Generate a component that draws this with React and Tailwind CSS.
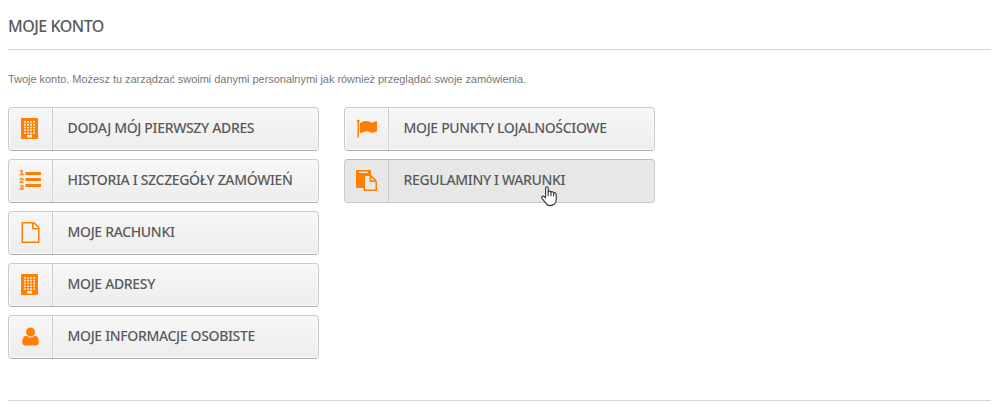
const windowRows = [0, 1, 2, 3, 4]
const windowCols = [0, 1, 2, 3]

function BuildingIcon() {
    return (
        <svg className="mr-px w-[17px] h-[21px]" viewBox="0 0 17 21" fill="currentColor">
            <rect width="17" height="21" rx="0.8" />
            {windowRows.map((row) =>
                windowCols.map((col) => (
                    <rect key={`${row}-${col}`} x={3 + col * 3} y={3 + row * 2.8} width="2" height="1.7" fill="#f3f3f3" fillOpacity="0.85" />
                ))
            )}
            <rect x="6" y="16.8" width="5" height="2.7" fill="#f3f3f3" />
        </svg>
    )
}

function ListIcon() {
    return (
        <svg className="w-[22px] h-[22px]" viewBox="0 0 22 22" fill="currentColor" stroke="currentColor" strokeWidth="0">
            <text x="0.6" y="6.1" fontSize="8" fontWeight="bold" strokeWidth="0.3" fontFamily="Liberation Sans, sans-serif">1</text>
            <text x="0.6" y="13.6" fontSize="8" fontWeight="bold" strokeWidth="0.3" fontFamily="Liberation Sans, sans-serif">2</text>
            <text x="0.6" y="21.1" fontSize="8" fontWeight="bold" strokeWidth="0.3" fontFamily="Liberation Sans, sans-serif">3</text>
            <rect x="6.5" y="3" width="15.5" height="3" rx="0.4" />
            <rect x="6.5" y="9" width="15.5" height="3" rx="0.4" />
            <rect x="6.5" y="15" width="15.5" height="3" rx="0.4" />
        </svg>
    )
}

function FileIcon() {
    return (
        <svg className="w-[21px] h-[21px]" viewBox="0 0 1792 1792" fill="currentColor">
            <path d="M1596 380q28 28 48 76t20 88v1152q0 40-28 68t-68 28h-1344q-40 0-68-28t-28-68v-1600q0-40 28-68t68-28h896q40 0 88 20t76 48zm-444-244v376h376q-10-29-22-41l-313-313q-12-12-41-22zm384 1528v-1024h-416q-40 0-68-28t-28-68v-416h-768v1536h1280z" />
        </svg>
    )
}

function UserIcon() {
    return (
        <svg className="w-[17px] h-[21px]" viewBox="0 0 1408 1792" fill="currentColor">
            <path transform="matrix(1 0 0 -1 0 1536)" d="M1408 131q0-120-73-189.500t-194-69.500h-874q-121 0-194 69.500t-73 189.500q0 53 3.500 103.500t14 109 26.500 108.500 43 97.500 62 81 85.500 53.500 111.500 20q9 0 42-21.500t74.500-48 108-48 133.500-21.500 133.500 21.500 108 48 74.500 48 42 21.500q61 0 111.500-20t85.500-53.500 62-81 43-97.500 26.500-108.500 14-109 3.500-103.500zM1088 1024q0-159-112.500-271.500t-271.500-112.500-271.500 112.500-112.500 271.500 112.500 271.500 271.500 112.500 271.500-112.500 112.500-271.500z" />
        </svg>
    )
}

function FlagIcon() {
    return (
        <svg className="w-[21px] h-[21px]" viewBox="0 0 1792 1792" fill="currentColor">
            <path d="M320 256q0 72-64 110v1266q0 13-9.500 22.500t-22.500 9.500h-64q-13 0-22.500-9.500t-9.500-22.500v-1266q-64-38-64-110 0-53 37.500-90.500t90.500-37.500 90.500 37.500 37.500 90.500zM1792 320v763q0 25-12.500 38.500t-39.500 27.500q-215 116-369 116-61 0-123.500-22t-108.500-48-115.500-48-142.500-22q-192 0-464 146-17 9-33 9-26 0-45-19t-19-45v-742q0-32 31-55 21-14 79-43 236-120 421-120 107 0 200 29t219 88q38 19 88 19 54 0 117.500-21t110-47 88-47 54.500-21q26 0 45 19t19 45z" />
        </svg>
    )
}

function PasteIcon() {
    return (
        <svg className="w-[21px] h-[21px]" viewBox="0 0 1792 1792" fill="currentColor">
            <path d="M768 1664h896v-640h-416q-40 0-68-28t-28-68v-416h-384v1152zm256-1440v-64q0-13-9.500-22.500t-22.500-9.500h-704q-13 0-22.500 9.500t-9.500 22.500v64q0 13 9.500 22.500t22.500 9.500h704q13 0 22.500-9.500t9.500-22.500zm256 672h299l-299-299v299zm512 128v672q0 40-28 68t-68 28h-960q-40 0-68-28t-28-68v-160h-544q-40 0-68-28t-28-68v-1344q0-40 28-68t68-28h1088q40 0 68 28t28 68v328q21 13 36 28l408 408q28 28 48 76t20 88z" />
        </svg>
    )
}

function HandCursor() {
    return (
        <svg className="absolute left-[197px] top-[27px] w-[16px] h-[21px]" viewBox="0 0 16 21" fill="#fff" stroke="#33333f" strokeWidth="1.1" strokeLinejoin="round" strokeLinecap="round">
            <path d="M4.600 12V2.200q0-1.500 1.300-1.500t1.300 1.500V5.800q.3-.8 1.400-.7t1.400 1.100q.4-.7 1.400-.5t1.300 1.200q.5-.5 1.400-.2t1.100 1.400V13.500q0 3-1.800 4.500T9 19.600Q6.500 19.600 5.200 17.600L1.200 12.600Q.3 11.200 1.200 10.400t2.200.3z" />
            <path d="M7.200 5.800V9.800M10 6.400V9.800M12.700 7V10" fill="none" />
        </svg>
    )
}

const columns = [
    [
        { label: 'Dodaj mój pierwszy adres', icon: BuildingIcon },
        { label: 'Historia i szczegóły zamówień', icon: ListIcon },
        { label: 'Moje rachunki', icon: FileIcon },
        { label: 'Moje adresy', icon: BuildingIcon },
        { label: 'Moje informacje osobiste', icon: UserIcon },
    ],
    [
        { label: 'Moje punkty lojalnościowe', icon: FlagIcon },
        { label: 'Regulaminy i warunki', icon: PasteIcon, active: true },
    ],
]

function AccountLink({ label, icon: Icon, active }) {
    return (
        <li className="relative">
            <a
                href="#"
                className={`flex h-11 w-[311px] overflow-hidden rounded-[4px] border text-[#5a5959] ${
                    active
                        ? 'border-[#cacaca] border-t-[#b7b7b7] bg-[#e7e7e7]'
                        : 'border-[#cacaca] border-b-[#a9a9a9] bg-linear-to-b from-[#f7f7f7] to-[#ededed]'
                }`}
            >
                <span className={`flex w-[44px] shrink-0 items-center justify-center border-r border-[#cacaca] pr-px pb-[2px] text-[#ff7f00] ${active ? '' : 'shadow-[inset_0_0_0_1px_#fafafa]'}`}>
                    <Icon />
                </span>
                <span className={`flex flex-1 items-center pb-[4px] pl-[14.5px] font-['Noto_Sans','Open_Sans',sans-serif] text-[14px] tracking-[-0.34px] font-medium uppercase whitespace-nowrap ${active ? '' : 'shadow-[inset_0_0_0_1px_#fafafa]'}`}>
                    {label}
                </span>
            </a>
            {active && <HandCursor />}
        </li>
    )
}

export default function App() {
    return (
        <div className="h-[416px] overflow-hidden bg-white pl-2 pr-[9px]">
            <h1 className="h-[50px] border-b border-[#d6d4d4] pt-[15px] font-['Noto_Sans','Open_Sans',sans-serif] text-[16px] leading-[23px] tracking-[-0.5px] font-medium text-[#5a5959] uppercase">
                Moje konto
            </h1>
            <p className="pt-[20px] font-['Liberation_Sans',sans-serif] text-[11px] leading-[18px] tracking-[-0.04px] text-[#777777]">
                Twoje konto. Możesz tu zarządzać swoimi danymi personalnymi jak również przeglądać swoje zamówienia.
            </p>
            <div className="flex gap-[25px] pt-[19px]">
                {columns.map((links, index) => (
                    <ul key={index} className="flex flex-col gap-2">
                        {links.map((link) => (
                            <AccountLink key={link.label} {...link} />
                        ))}
                    </ul>
                ))}
            </div>
            <div className="mt-[41px] border-t border-[#d6d4d4]" />
        </div>
    )
}
